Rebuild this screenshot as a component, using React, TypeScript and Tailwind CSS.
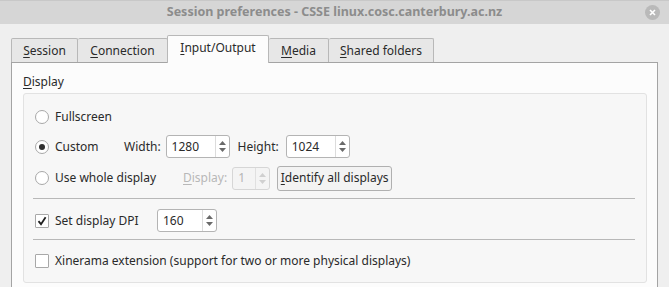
import React from 'react';

const font = { fontFamily: '"Noto Sans", "DejaVu Sans", sans-serif' };

function Mn({ c }: { c: string }) {
  return <span className="underline underline-offset-2 decoration-1">{c}</span>;
}

function Radio({ checked }: { checked?: boolean }) {
  return (
    <span className="w-[14px] h-[14px] rounded-full border border-[#a8a8a8] bg-white flex items-center justify-center shrink-0">
      {checked && <span className="w-[6px] h-[6px] rounded-full bg-[#2f2f2f]" />}
    </span>
  );
}

function Check({ checked }: { checked?: boolean }) {
  return (
    <span className="w-[14px] h-[14px] border border-[#a8a8a8] bg-white flex items-center justify-center shrink-0 rounded-[1px]">
      {checked && (
        <svg width="10" height="10" viewBox="0 0 10 10">
          <path d="M1.5 5.2 L4 8.2 L8.6 1.2" fill="none" stroke="#1f1f1f" strokeWidth="1.8" />
        </svg>
      )}
    </span>
  );
}

function Spin({ value, w, disabled }: { value: string; w: string; disabled?: boolean }) {
  return (
    <div
      className={`${w} h-[23px] flex rounded-[3px] border shrink-0 ${
        disabled ? 'border-[#d6d6d6] bg-[#f4f4f4] text-[#b4b4b4]' : 'border-[#b4b4b4] bg-white text-[#2a2a2a]'
      }`}
    >
      <div className="flex-1 flex items-center pl-[5px]">{value}</div>
      <div className={`w-[14px] border-l ${disabled ? 'border-[#e0e0e0]' : 'border-[#dcdcdc]'} flex flex-col items-center justify-center gap-[3px]`}>
        <svg width="7" height="4" viewBox="0 0 7 4">
          <path d="M0 4 L3.5 0 L7 4 Z" fill={disabled ? '#d0d0d0' : '#6a6a6a'} />
        </svg>
        <svg width="7" height="4" viewBox="0 0 7 4">
          <path d="M0 0 L3.5 4 L7 0 Z" fill={disabled ? '#d0d0d0' : '#6a6a6a'} />
        </svg>
      </div>
    </div>
  );
}

const tabs = [
  { m: 'S', rest: 'ession', w: 'w-[67px]' },
  { m: 'C', rest: 'onnection', w: 'w-[90px]' },
  { m: 'I', rest: 'nput/Output', w: 'w-[102px]', active: true },
  { m: 'M', rest: 'edia', w: 'w-[60px]' },
  { m: 'S', rest: 'hared folders', w: 'w-[105px]' },
];

export default function App() {
  return (
    <div className="w-[669px] h-[287px] overflow-hidden bg-[#efefef] text-[12px] text-[#2a2a2a]" style={font}>
      {/* Title bar */}
      <div className="h-[24px] bg-[#d6d6d6] border-t border-[#c8c8c8] flex items-center relative">
        <div className="flex-1 text-center font-bold text-[#8c8c8c] text-[12.5px]">
          Session preferences - CSSE linux.cosc.canterbury.ac.nz
        </div>
        <div className="absolute right-[9px] top-[4px] w-[15px] h-[15px] rounded-full bg-[#b9b9b9] flex items-center justify-center">
          <svg width="7" height="7" viewBox="0 0 7 7">
            <path d="M1 1 L6 6 M6 1 L1 6" stroke="#ffffff" strokeWidth="1.6" />
          </svg>
        </div>
      </div>

      <div className="pl-[11px] pt-[11px] pr-[11px]">
        {/* Tabs */}
        <div className="flex items-end h-[27px]">
          {tabs.map((t, i) => (
            <div
              key={i}
              className={`${t.w} flex items-center justify-center border-t border-r border-[#b8b8b8] rounded-t-[2px] ${
                i === 0 ? 'border-l' : ''
              } ${t.active ? 'h-[28px] bg-[#fcfcfc] border-l -ml-px -mb-px relative z-10 pb-[3px]' : 'h-[24px] bg-[#e7e7e7]'}`}
            >
              <span>
                <Mn c={t.m} />
                {t.rest}
              </span>
            </div>
          ))}
        </div>

        {/* Pane */}
        <div className="w-[647px] h-[240px] border border-[#a4a4a4] bg-[#fcfcfc] pl-[11px] pr-[10px]">
          <div className="h-[30px] flex items-center pt-[8px]">
            <span>
              <Mn c="D" />
              isplay
            </span>
          </div>
          <div className="border border-[#e2e2e2] bg-[#f7f7f7] rounded-[3px] h-[190px] pl-[11px] pr-[11px] pt-[11px]">
            {/* Fullscreen */}
            <div className="h-[23px] flex items-center gap-[6px]">
              <Radio />
              <span>Fullscreen</span>
            </div>
            {/* Custom */}
            <div className="h-[23px] mt-[7px] flex items-center">
              <div className="w-[89px] flex items-center gap-[6px]">
                <Radio checked />
                <span>Custom</span>
              </div>
              <span className="mr-[5px]">Width:</span>
              <Spin value="1280" w="w-[64px]" />
              <span className="ml-[8px] mr-[7px]">Height:</span>
              <Spin value="1024" w="w-[64px]" />
            </div>
            {/* Use whole display */}
            <div className="h-[24px] mt-[8px] flex items-center">
              <div className="w-[148px] flex items-center gap-[6px]">
                <Radio />
                <span>Use whole display</span>
              </div>
              <span className="mr-[5px] text-[#b8b8b8]">
                <Mn c="D" />
                isplay:
              </span>
              <Spin value="1" w="w-[38px]" disabled />
              <button className="ml-[7px] w-[115px] h-[25px] border border-[#b0b0b0] rounded-[3px] bg-[#f3f3f3] text-[12px] flex items-center justify-center">
                <span>
                  <Mn c="I" />
                  dentify all displays
                </span>
              </button>
            </div>
            <div className="h-px bg-[#b8b8b8] mt-[8px] ml-[-2px] w-[602px]" />
            {/* DPI */}
            <div className="h-[23px] mt-[10px] flex items-center">
              <div className="w-[122px] flex items-center gap-[6px]">
                <Check checked />
                <span>Set display DPI</span>
              </div>
              <Spin value="160" w="w-[60px]" />
            </div>
            <div className="h-px bg-[#b8b8b8] mt-[7px] ml-[-2px] w-[602px]" />
            {/* Xinerama */}
            <div className="h-[23px] mt-[9px] flex items-center gap-[6px]">
              <Check />
              <span>Xinerama extension (support for two or more physical displays)</span>
            </div>
          </div>
        </div>
      </div>
    </div>
  );
}
